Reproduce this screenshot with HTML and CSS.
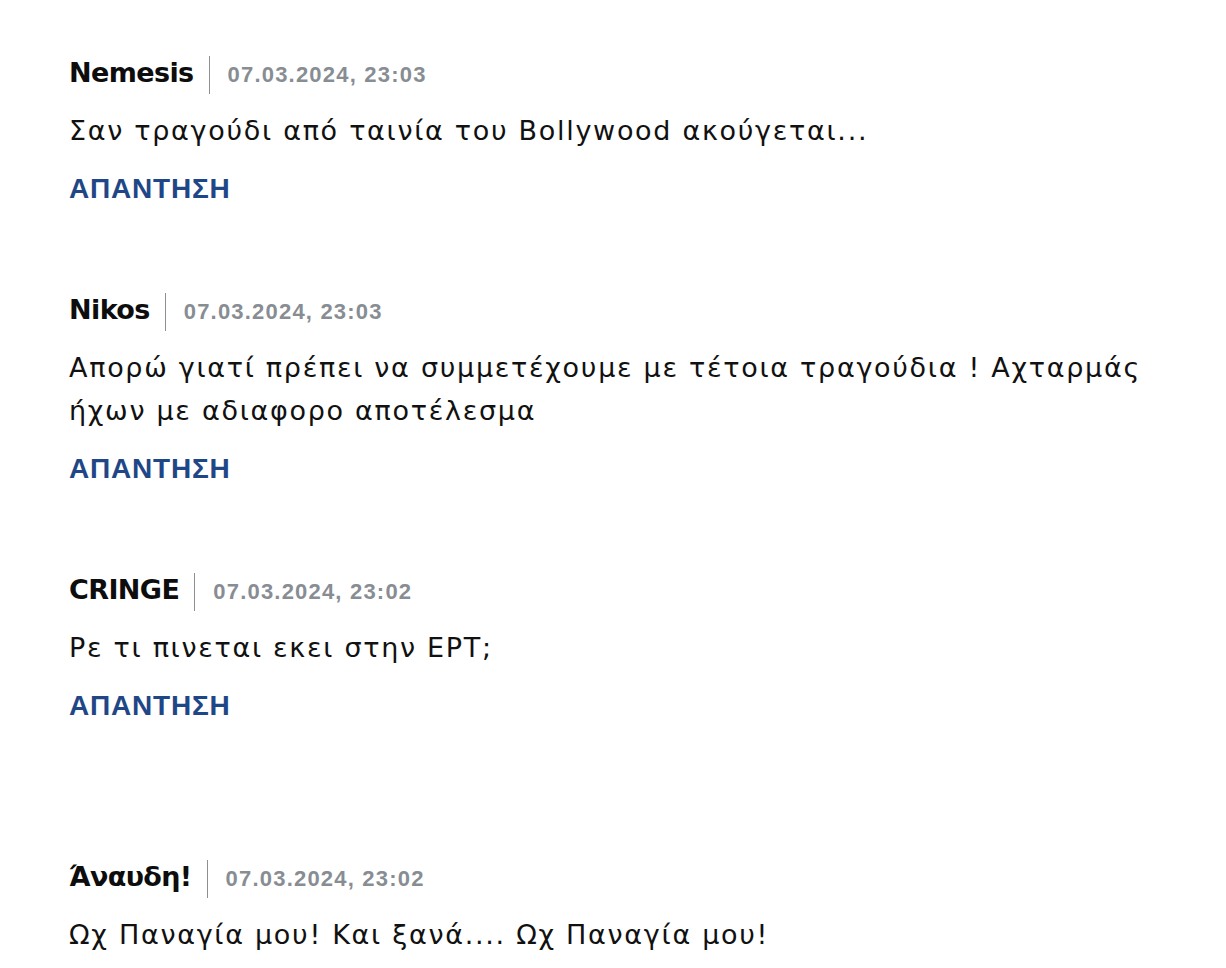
FILE: index.html
```html
<!DOCTYPE html>
<html lang="el">
<head>
<meta charset="utf-8">
<title>Σχόλια</title>
<link rel="stylesheet" href="styles.css">
</head>
<body>
<section class="comments">
  <article class="comment">
    <div class="meta"><span class="name">Nemesis</span><span class="divider"></span><span class="date">07.03.2024, 23:03</span></div>
    <p class="text">Σαν τραγούδι από ταινία του Bollywood ακούγεται...</p>
    <a class="reply" href="#">ΑΠΑΝΤΗΣΗ</a>
  </article>
  <article class="comment">
    <div class="meta"><span class="name">Nikos</span><span class="divider"></span><span class="date">07.03.2024, 23:03</span></div>
    <p class="text">Απορώ γιατί πρέπει να συμμετέχουμε με τέτοια τραγούδια ! Αχταρμάς ήχων με αδιαφορο αποτέλεσμα</p>
    <a class="reply" href="#">ΑΠΑΝΤΗΣΗ</a>
  </article>
  <article class="comment comment-spaced">
    <div class="meta"><span class="name">CRINGE</span><span class="divider"></span><span class="date">07.03.2024, 23:02</span></div>
    <p class="text">Ρε τι πινεται εκει στην ΕΡΤ;</p>
    <a class="reply" href="#">ΑΠΑΝΤΗΣΗ</a>
  </article>
  <article class="comment">
    <div class="meta"><span class="name">Άναυδη!</span><span class="divider"></span><span class="date">07.03.2024, 23:02</span></div>
    <p class="text">Ωχ Παναγία μου! Και ξανά.... Ωχ Παναγία μου!</p>
    <a class="reply" href="#">ΑΠΑΝΤΗΣΗ</a>
  </article>
</section>
</body>
</html>
```
FILE: styles.css
```css
html, body {
  margin: 0;
  padding: 0;
  background: #ffffff;
}
body {
  font-family: "DejaVu Sans", "Noto Sans", sans-serif;
  color: #111111;
  overflow: hidden;
}
.comments {
  padding: 54px 40px 0 69px;
  display: flex;
  flex-direction: column;
}
.comment {
  display: flex;
  flex-direction: column;
  align-items: flex-start;
  padding-bottom: 87px;
}
.comment-spaced {
  padding-bottom: 137px;
}
.meta {
  display: flex;
  align-items: baseline;
  height: 38px;
  line-height: 38px;
}
.name {
  font-family: "DejaVu Sans", sans-serif;
  font-weight: bold;
  font-size: 27px;
  color: #0d0d0d;
  letter-spacing: -0.6px;
}
.divider {
  align-self: flex-end;
  width: 1px;
  height: 38px;
  margin: 0 18px -2px 15px;
  background: #8f8f8f;
}
.date {
  font-family: "Liberation Sans", Arial, sans-serif;
  font-weight: bold;
  font-size: 22px;
  letter-spacing: 1.2px;
  color: #878d93;
}
.text {
  margin: 17px 0 0 0;
  font-size: 27px;
  line-height: 43px;
  letter-spacing: 1.7px;
  color: #111111;
  max-width: 1100px;
}
.reply {
  margin-top: 22px;
  font-family: "Liberation Sans", Arial, sans-serif;
  font-weight: bold;
  font-size: 28px;
  line-height: 30px;
  letter-spacing: 0.8px;
  color: #1f4787;
  text-decoration: none;
}
```
